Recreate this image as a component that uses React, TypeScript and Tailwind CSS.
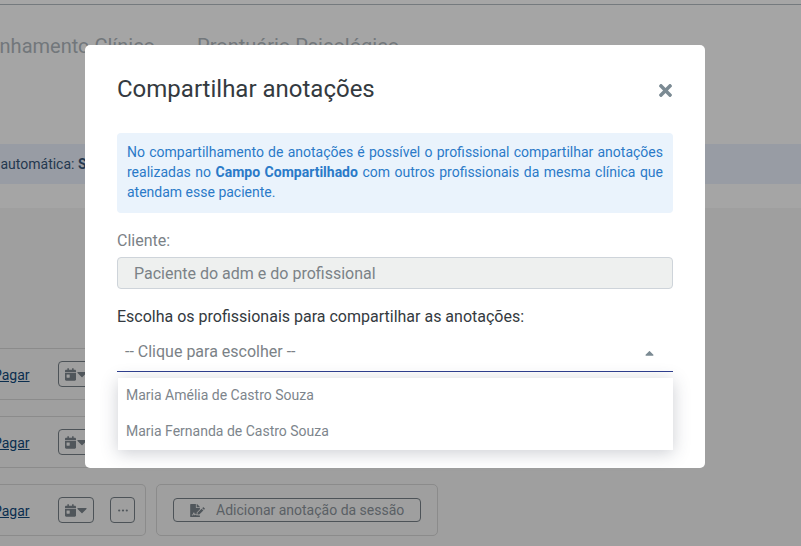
import React from "react";
import { FaCalendarDay, FaCaretDown, FaCaretUp, FaFileSignature, FaTimes } from "react-icons/fa";

const professionals: string[] = ["Maria Amélia de Castro Souza", "Maria Fernanda de Castro Souza"];

const SessionRow: React.FC<{ extended?: boolean }> = ({ extended }) => (
  <div className="flex gap-[10px] h-[52px] mb-[16px]">
    <div className="w-[147px] ml-[-1px] shrink-0 flex items-center border border-[#8b8b8b] rounded-[5px] border-l-0 rounded-l-none">
      <a className="ml-[-6px] mt-[2px] w-[36px] text-[14px] underline text-[#0b2e4f]">Pagar</a>
      <span className="ml-[29px] w-[36px] h-[26px] flex items-center justify-center gap-[1px] border border-[#4d5358] rounded-[4px] text-[#50565b]">
        <FaCalendarDay className="w-[11px] h-[13px]" />
        <FaCaretDown className="w-[10px] h-[16px]" />
      </span>
      {extended && (
        <span className="ml-[16px] w-[25px] h-[26px] flex items-center justify-center border border-[#4d5358] rounded-[4px] text-[#50565b]">
          <svg width="10" height="3" viewBox="0 0 10 3" fill="currentColor">
            <circle cx="1.2" cy="1.5" r="1.1" />
            <circle cx="5" cy="1.5" r="1.1" />
            <circle cx="8.8" cy="1.5" r="1.1" />
          </svg>
        </span>
      )}
    </div>
    {extended && (
      <div className="w-[282px] shrink-0 flex items-center justify-center border border-[#8b8b8b] rounded-[5px]">
        <span className="w-[248px] h-[24px] flex items-center border border-[#4d5358] rounded-[4px] text-[#5a6065] text-[14px] pl-[16px] gap-[11px]">
          <FaFileSignature className="w-[15px] h-[13px] text-[#50565b]" />
          Adicionar anotação da sessão
        </span>
      </div>
    )}
  </div>
);

export default function App() {
  return (
    <div className="relative w-[801px] h-[546px] overflow-hidden bg-[#a5a5a5] font-['Roboto',sans-serif]">
      {/* Page behind the overlay */}
      <div className="h-[4px] bg-[#a6a6a6] border-b border-[#757a7e] box-content"></div>
      <div className="flex h-[139px] pt-[29px] text-[20px] leading-[24px] text-[#72777b]">
        <span className="ml-[-75px] whitespace-nowrap">Acompanhamento Clínico</span>
        <span className="ml-[42px] whitespace-nowrap">Prontuário Psicológico</span>
      </div>
      <div className="h-[40px] bg-[#989ca4] flex items-center text-[14px] text-[#24384f] whitespace-nowrap">
        <span className="ml-[-3px]">&nbsp;automática: <b>Sim</b></span>
      </div>
      <div className="h-[24px]"></div>
      <div className="h-[338px] bg-[#9f9f9f] pt-[140px]">
        <SessionRow />
        <SessionRow />
        <SessionRow extended />
      </div>

      {/* Modal */}
      <div className="absolute left-[85px] top-[45px] w-[620px] h-[423px] bg-white rounded-[5px] px-[32px]">
        <div className="flex items-center justify-between h-[88px] pt-[2px]">
          <h2 className="text-[24px] leading-[28px] text-[#343a40] mt-[-2px]">Compartilhar anotações</h2>
          <FaTimes className="w-[13px] h-[19px] text-[#7b8a93] mr-[1px]" />
        </div>
        <div className="h-[80px] bg-[#eaf3fc] rounded-[4px] px-[10px] py-[9px] text-[14px] leading-[20px] text-[#2a7ac8] text-justify">
          No compartilhamento de anotações é possível o profissional compartilhar anotações realizadas no <b>Campo Compartilhado</b> com outros profissionais da mesma clínica que atendam esse paciente.
        </div>
        <div className="mt-[17px] text-[16px] leading-[22px] text-[#7b8287]">Cliente:</div>
        <div className="mt-[5px] h-[32px] bg-[#eef0ef] border border-[#ced4da] rounded-[4px] pl-[16px] pt-[1px] flex items-center text-[16px] text-[#7b8287]">
          Paciente do adm e do profissional
        </div>
        <div className="mt-[17px] text-[16px] leading-[22px] text-[#343a40]">Escolha os profissionais para compartilhar as anotações:</div>
        <div className="relative mt-[6px] h-[38px] border-b border-[#2f3f8f] flex items-center justify-between pl-[8px] pr-[19px] pb-[2px] text-[16px] text-[#7b8287]">
          -- Clique para escolher --
          <FaCaretUp className="w-[9px] h-[14px] text-[#7b8a93] mt-[2px]" />
          <div className="absolute left-[1px] right-0 top-[44px] h-[72px] bg-white shadow-[0_3px_16px_rgba(50,60,80,0.25)] pb-[2px] text-[14px] text-[#7d858c]">
            {professionals.map((name: string) => (
              <div key={name} className="h-[36px] flex items-center pl-[8px] pb-[2px]">{name}</div>
            ))}
          </div>
        </div>
      </div>
    </div>
  );
}
